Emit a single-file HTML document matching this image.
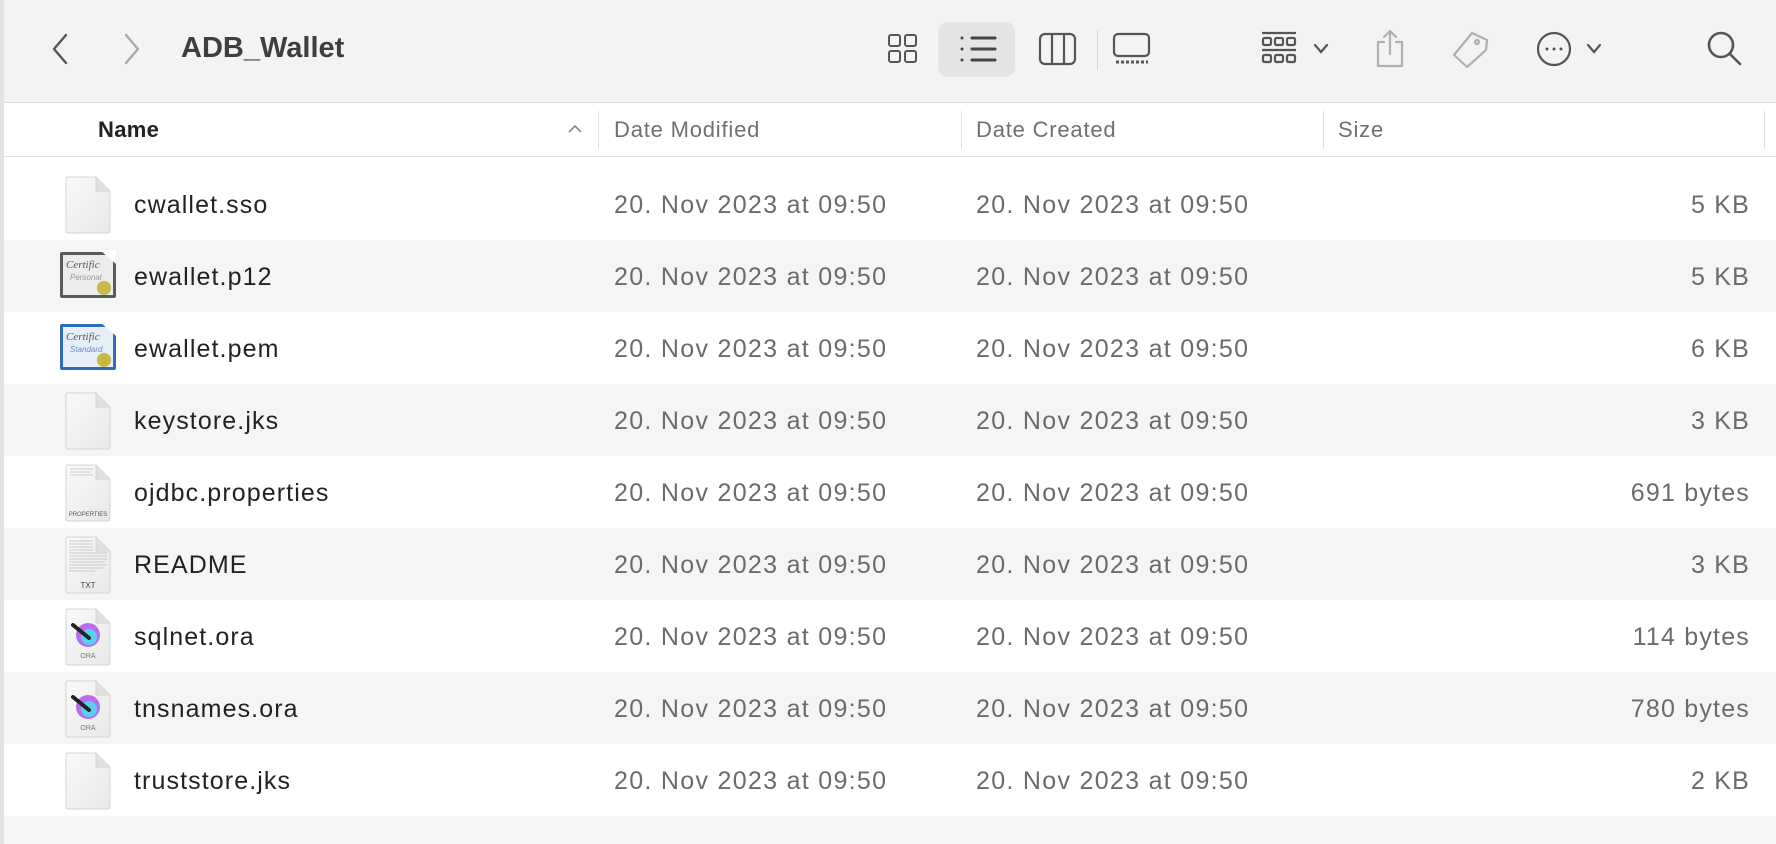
<!DOCTYPE html>
<html><head><meta charset="utf-8"><style>
*{margin:0;padding:0;box-sizing:border-box}
body{width:1776px;height:844px;overflow:hidden;background:#fff;font-family:"Liberation Sans",sans-serif;position:relative}
.tb{position:absolute;left:0;top:0;width:1776px;height:103px;background:#f3f3f2;border-bottom:1px solid #dcdcdc}
.lb{position:absolute;left:0;top:0;width:4px;height:844px;background:#e2e2e2}
.ab{position:absolute}
.hdr{position:absolute;left:4px;top:103px;width:1772px;height:54px;border-bottom:1px solid #e4e4e4;background:#fff}
.ht{position:absolute;top:14px;font-size:22px;letter-spacing:0.8px;color:#707070}
.sep{position:absolute;top:8px;width:1px;height:38px;background:#e0e0e0}
.row{position:absolute;left:4px;width:1772px;height:72px}
.row.g{background:#f4f5f5}
.nm{position:absolute;left:130px;top:23px;font-size:25px;letter-spacing:1.1px;color:#222}
.d1,.d2{position:absolute;top:23px;font-size:25px;letter-spacing:1.3px;color:#6b6b6b}
.d1{left:610px}.d2{left:972px}
.sz{position:absolute;right:26px;top:23px;font-size:25px;letter-spacing:1.2px;color:#6b6b6b}
.ic{position:absolute;left:61px;top:8px}
</style></head><body>
<div class="tb">
<svg class="ab" style="left:48px;top:32px" width="24" height="34"><path d="M18 3 L6 17 L18 31" stroke="#555" stroke-width="2.4" fill="none" stroke-linecap="round" stroke-linejoin="round"/></svg>
<svg class="ab" style="left:120px;top:32px" width="24" height="34"><path d="M6 3 L18 17 L6 31" stroke="#aaa" stroke-width="2.4" fill="none" stroke-linecap="round" stroke-linejoin="round"/></svg>
<div class="ab" style="left:181px;top:32px;font-size:29px;font-weight:bold;color:#3e3e3e">ADB_Wallet</div>
<svg class="ab" style="left:887px;top:33px" width="32" height="32" fill="none" stroke="#555" stroke-width="2"><rect x="2" y="2" width="11" height="11" rx="2"/><rect x="18" y="2" width="11" height="11" rx="2"/><rect x="2" y="18" width="11" height="11" rx="2"/><rect x="18" y="18" width="11" height="11" rx="2"/></svg>
<div class="ab" style="left:938px;top:22px;width:77px;height:55px;background:#e4e4e3;border-radius:10px"></div>
<svg class="ab" style="left:958px;top:33px" width="40" height="32" stroke="#444" stroke-width="3" stroke-linecap="round"><path d="M14 5H37M14 16H37M14 27H37"/><circle cx="4" cy="5" r="1.5" fill="#444" stroke="none"/><circle cx="4" cy="16" r="1.5" fill="#444" stroke="none"/><circle cx="4" cy="27" r="1.5" fill="#444" stroke="none"/></svg>
<svg class="ab" style="left:1038px;top:32px" width="40" height="34" fill="none" stroke="#555" stroke-width="2.2"><rect x="2" y="2" width="35" height="30" rx="5"/><path d="M14 2V32M26 2V32"/></svg>
<div class="ab" style="left:1097px;top:30px;width:1px;height:40px;background:#d6d6d6"></div>
<svg class="ab" style="left:1112px;top:32px" width="40" height="34" fill="none" stroke="#555" stroke-width="2.2"><rect x="2" y="2" width="35" height="22" rx="4"/><path d="M4 30H36" stroke-dasharray="3 2" stroke-width="3"/></svg>
<svg class="ab" style="left:1260px;top:30px" width="40" height="38" fill="none" stroke="#555" stroke-width="2.2"><path d="M2 3H36M2 20H36"/><rect x="3" y="8" width="8" height="7" rx="1.5"/><rect x="15" y="8" width="8" height="7" rx="1.5"/><rect x="27" y="8" width="8" height="7" rx="1.5"/><rect x="3" y="25" width="8" height="7" rx="1.5"/><rect x="15" y="25" width="8" height="7" rx="1.5"/><rect x="27" y="25" width="8" height="7" rx="1.5"/></svg>
<svg class="ab" style="left:1312px;top:42px" width="18" height="14"><path d="M3 3L9 10L15 3" stroke="#555" stroke-width="2.2" fill="none" stroke-linecap="round"/></svg>
<svg class="ab" style="left:1372px;top:28px" width="36" height="42" fill="none" stroke="#b0b0b0" stroke-width="2.2" stroke-linecap="round" stroke-linejoin="round"><path d="M12 14H6V38H30V14H24M18 26V3M12 9L18 3L24 9"/></svg>
<svg class="ab" style="left:1450px;top:30px" width="40" height="40" fill="none" stroke="#b0b0b0" stroke-width="2.2" stroke-linejoin="round"><path d="M22 3L37 10L36 20L17 37L4 25L22 3Z"/><circle cx="27" cy="12" r="2"/></svg>
<svg class="ab" style="left:1536px;top:31px" width="36" height="36" fill="none" stroke="#555" stroke-width="2.2"><circle cx="18" cy="18" r="16"/><circle cx="11" cy="18" r="1.5" fill="#555" stroke="none"/><circle cx="18" cy="18" r="1.5" fill="#555" stroke="none"/><circle cx="25" cy="18" r="1.5" fill="#555" stroke="none"/></svg>
<svg class="ab" style="left:1585px;top:42px" width="18" height="14"><path d="M3 3L9 10L15 3" stroke="#555" stroke-width="2.2" fill="none" stroke-linecap="round"/></svg>
<svg class="ab" style="left:1706px;top:30px" width="38" height="38" fill="none" stroke="#555" stroke-width="2.6" stroke-linecap="round"><circle cx="15" cy="15" r="12"/><path d="M24 24L34 34"/></svg>
</div>
<div class="hdr">
<div class="ht" style="left:94px;color:#222;font-weight:bold;letter-spacing:0.3px">Name</div>
<svg class="ab" style="left:563px;top:20px" width="16" height="12"><path d="M2 9L8 3L14 9" stroke="#888" stroke-width="1.6" fill="none"/></svg>
<div class="sep" style="left:594px"></div>
<div class="ht" style="left:610px">Date Modified</div>
<div class="sep" style="left:957px"></div>
<div class="ht" style="left:972px">Date Created</div>
<div class="sep" style="left:1319px"></div>
<div class="ht" style="left:1334px">Size</div>
<div class="sep" style="left:1760px"></div>
</div>

<svg width="0" height="0" style="position:absolute"><defs>
<linearGradient id="pg" x1="0" y1="0" x2="1" y2="1"><stop offset="0" stop-color="#fafafa"/><stop offset="1" stop-color="#e8e8e8"/></linearGradient>
</defs></svg>

<div class="row" style="top:168px"><svg class="ic" width="46" height="58"><path d="M1 3Q1 1 3 1H31L45 15V55Q45 57 43 57H3Q1 57 1 55Z" fill="url(#pg)" stroke="#d4d4d4"/><path d="M31 1V15H45" fill="#e0e0e0" stroke="#d4d4d4"/></svg><div class="nm">cwallet.sso</div><div class="d1">20. Nov 2023 at 09:50</div><div class="d2">20. Nov 2023 at 09:50</div><div class="sz">5 KB</div></div>
<div class="row g" style="top:240px"><svg class="ab" style="left:54px;top:10px" width="60" height="50"><rect x="2" y="2" width="56" height="46" rx="2" fill="#5a5a5a"/><rect x="5" y="5" width="50" height="40" fill="#ececec"/><text x="8" y="18" font-size="11" font-style="italic" font-family="Liberation Serif,serif" fill="#555">Certific</text><text x="12" y="30" font-size="8" font-style="italic" fill="#999">Personal</text><circle cx="46" cy="38" r="7" fill="#c8b845"/><path d="M42 0H58V14Z" fill="#fff"/></svg><div class="nm">ewallet.p12</div><div class="d1">20. Nov 2023 at 09:50</div><div class="d2">20. Nov 2023 at 09:50</div><div class="sz">5 KB</div></div>
<div class="row" style="top:312px"><svg class="ab" style="left:54px;top:10px" width="60" height="50"><rect x="2" y="2" width="56" height="46" rx="2" fill="#2e6cb8"/><rect x="5" y="5" width="50" height="40" fill="#e6eef7"/><text x="8" y="18" font-size="11" font-style="italic" font-family="Liberation Serif,serif" fill="#555">Certific</text><text x="12" y="30" font-size="8" font-style="italic" fill="#6a8fc8">Standard</text><circle cx="46" cy="38" r="7" fill="#c8b845"/><path d="M42 0H58V14Z" fill="#fff"/></svg><div class="nm">ewallet.pem</div><div class="d1">20. Nov 2023 at 09:50</div><div class="d2">20. Nov 2023 at 09:50</div><div class="sz">6 KB</div></div>
<div class="row g" style="top:384px"><svg class="ic" width="46" height="58"><path d="M1 3Q1 1 3 1H31L45 15V55Q45 57 43 57H3Q1 57 1 55Z" fill="url(#pg)" stroke="#d4d4d4"/><path d="M31 1V15H45" fill="#e0e0e0" stroke="#d4d4d4"/></svg><div class="nm">keystore.jks</div><div class="d1">20. Nov 2023 at 09:50</div><div class="d2">20. Nov 2023 at 09:50</div><div class="sz">3 KB</div></div>
<div class="row" style="top:456px"><svg class="ic" width="46" height="58"><path d="M1 3Q1 1 3 1H31L45 15V55Q45 57 43 57H3Q1 57 1 55Z" fill="url(#pg)" stroke="#d4d4d4"/><path d="M31 1V15H45" fill="#e0e0e0" stroke="#d4d4d4"/><path d="M5 5H28M5 8H26M5 11H28" stroke="#ccc"/><text x="23" y="52" font-size="6" text-anchor="middle" fill="#555">PROPERTIES</text></svg><div class="nm">ojdbc.properties</div><div class="d1">20. Nov 2023 at 09:50</div><div class="d2">20. Nov 2023 at 09:50</div><div class="sz">691 bytes</div></div>
<div class="row g" style="top:528px"><svg class="ic" width="46" height="58"><path d="M1 3Q1 1 3 1H31L45 15V55Q45 57 43 57H3Q1 57 1 55Z" fill="url(#pg)" stroke="#d4d4d4"/><path d="M31 1V15H45" fill="#e0e0e0" stroke="#d4d4d4"/><path d="M4 5H28M4 8H28M4 11H28M4 14H28M4 17H42M4 20H42M4 23H42M4 26H40M4 29H42M4 32H38M4 35H30" stroke="#c8c8c8"/><text x="23" y="52" font-size="8" text-anchor="middle" fill="#444">TXT</text></svg><div class="nm">README</div><div class="d1">20. Nov 2023 at 09:50</div><div class="d2">20. Nov 2023 at 09:50</div><div class="sz">3 KB</div></div>
<div class="row" style="top:600px"><svg class="ic" width="46" height="58"><path d="M1 3Q1 1 3 1H31L45 15V55Q45 57 43 57H3Q1 57 1 55Z" fill="url(#pg)" stroke="#d4d4d4"/><path d="M31 1V15H45" fill="#e0e0e0" stroke="#d4d4d4"/><circle cx="23" cy="27" r="12" fill="#b86cf0"/><circle cx="24" cy="29" r="8" fill="#5ad0f0"/><path d="M8 17L24 30" stroke="#222" stroke-width="4" stroke-linecap="round"/><text x="23" y="50" font-size="7" text-anchor="middle" fill="#777">ORA</text></svg><div class="nm">sqlnet.ora</div><div class="d1">20. Nov 2023 at 09:50</div><div class="d2">20. Nov 2023 at 09:50</div><div class="sz">114 bytes</div></div>
<div class="row g" style="top:672px"><svg class="ic" width="46" height="58"><path d="M1 3Q1 1 3 1H31L45 15V55Q45 57 43 57H3Q1 57 1 55Z" fill="url(#pg)" stroke="#d4d4d4"/><path d="M31 1V15H45" fill="#e0e0e0" stroke="#d4d4d4"/><circle cx="23" cy="27" r="12" fill="#b86cf0"/><circle cx="24" cy="29" r="8" fill="#5ad0f0"/><path d="M8 17L24 30" stroke="#222" stroke-width="4" stroke-linecap="round"/><text x="23" y="50" font-size="7" text-anchor="middle" fill="#777">ORA</text></svg><div class="nm">tnsnames.ora</div><div class="d1">20. Nov 2023 at 09:50</div><div class="d2">20. Nov 2023 at 09:50</div><div class="sz">780 bytes</div></div>
<div class="row" style="top:744px"><svg class="ic" width="46" height="58"><path d="M1 3Q1 1 3 1H31L45 15V55Q45 57 43 57H3Q1 57 1 55Z" fill="url(#pg)" stroke="#d4d4d4"/><path d="M31 1V15H45" fill="#e0e0e0" stroke="#d4d4d4"/></svg><div class="nm">truststore.jks</div><div class="d1">20. Nov 2023 at 09:50</div><div class="d2">20. Nov 2023 at 09:50</div><div class="sz">2 KB</div></div>
<div class="row g" style="top:816px;height:28px"></div>
<div class="lb"></div>
</body></html>
